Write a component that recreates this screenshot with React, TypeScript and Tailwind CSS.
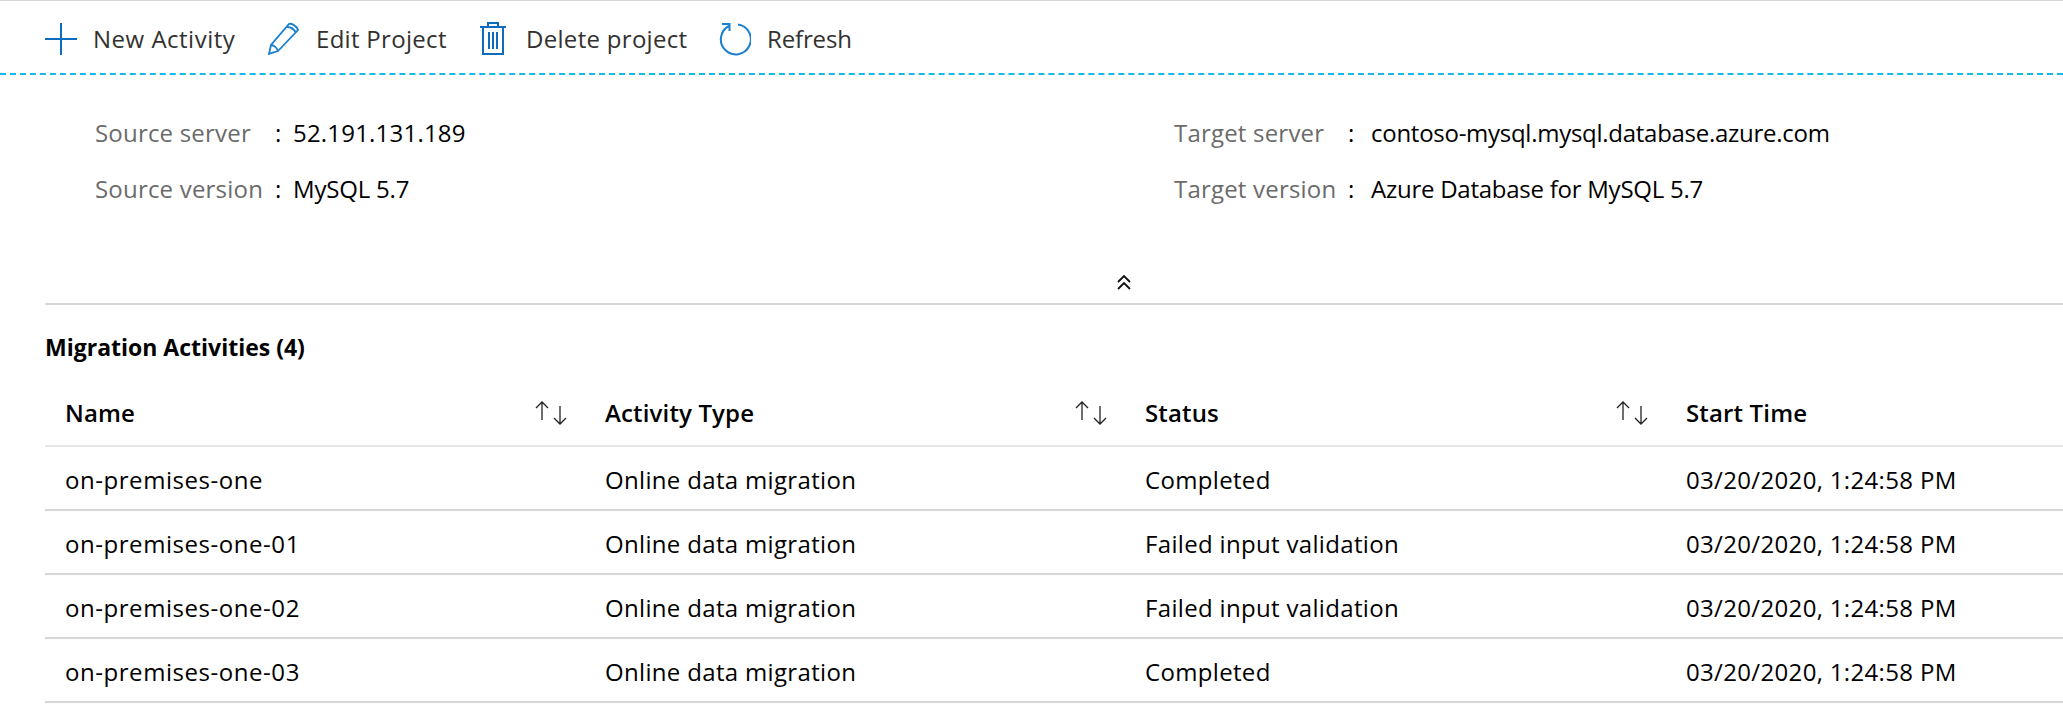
import React from "react";

const Btn = ({ icon, label, className }: { icon: React.ReactNode; label: string; className: string }) => (
  <div className={`flex items-center ${className}`}>
    {icon}
    <span>{label}</span>
  </div>
);

const rows = [
  ["on-premises-one", "Online data migration", "Completed", "03/20/2020, 1:24:58 PM"],
  ["on-premises-one-01", "Online data migration", "Failed input validation", "03/20/2020, 1:24:58 PM"],
  ["on-premises-one-02", "Online data migration", "Failed input validation", "03/20/2020, 1:24:58 PM"],
  ["on-premises-one-03", "Online data migration", "Completed", "03/20/2020, 1:24:58 PM"],
];

const Sort = () => (
  <svg width="34" height="26" viewBox="0 0 34 26" fill="none" stroke="#222" strokeWidth="1.3" className="mr-[17px]">
    <path d="M8 20V2M2 8l6-6 6 6" />
    <path d="M26 6v18M20 18l6 6 6-6" />
  </svg>
);

const Info = ({ label, value, w, cw, t }: { label: string; value: string; w: string; cw: string; t: string }) => (
  <div className="flex h-[56px] items-center">
    <span className={`${w} tracking-[0.2px] text-[#6b6b6b]`}>{label}</span>
    <span className={`${cw} text-black`}>:</span>
    <span className={`${t} text-black`}>{value}</span>
  </div>
);

export default function App() {
  return (
    <div className="h-[723px] w-[2063px] overflow-hidden bg-white text-[24px] text-black" style={{ fontFamily: '"Open Sans", "Noto Sans", sans-serif' }}>
      <div className="h-[75px] border-t border-[#d6d6d6] border-b-2 border-b-[#14b9e6] [border-bottom-style:dashed]">
        <div className="flex h-[72px] items-center pl-[45px] pt-[3px] tracking-[0.3px] text-[#323130]">
          <Btn
            className="w-[222px] tracking-[0.5px]"
            label="New Activity"
            icon={
              <svg width="32" height="32" viewBox="0 0 32 32" className="mr-[16px]" stroke="#0f6cbd" strokeWidth="2" fill="none">
                <path d="M16 0v32M0 16h32" />
              </svg>
            }
          />
          <Btn
            className="w-[212px]"
            label="Edit Project"
            icon={
              <svg width="34" height="34" viewBox="0 0 34 34" className="mr-[15px]" stroke="#1b7fd0" strokeWidth="1.8" fill="none">
                <path d="M2 32l2-9L22 2c2-1 8 2 9 6L11 29z M4 23c3 0 6 3 7 6 M20 5c4 0 7 2 9 6 M2 32l5-2" />
              </svg>
            }
          />
          <Btn
            className="w-[238px]"
            label="Delete project"
            icon={
              <svg width="28" height="34" viewBox="0 0 28 34" className="mr-[19px]" stroke="#0f6cbd" strokeWidth="2" fill="none">
                <path d="M1 5h26M9 5V1h10v4M4 5v27h20V5M10 10v17M14 10v17M18 10v17" />
              </svg>
            }
          />
          <Btn
            className="tracking-[-0.15px]"
            label="Refresh"
            icon={
              <svg width="34" height="34" viewBox="0 0 34 34" className="mr-[16px]" stroke="#1b7fd0" strokeWidth="2" fill="none">
                <path d="M12 4A15 15 0 1 0 21 2.500M5 2h7.500v7" />
              </svg>
            }
          />
        </div>
      </div>
      <div className="flex pl-[95px] pt-[30px]">
        <div className="w-[1079px]">
          <Info w="w-[180px]" cw="w-[18px]" t="tracking-[0.2px]" label="Source server" value="52.191.131.189" />
          <Info w="w-[180px]" cw="w-[18px]" t="tracking-[-0.2px]" label="Source version" value="MySQL 5.7" />
        </div>
        <div>
          <Info w="w-[174px]" cw="w-[23px]" t="tracking-[-0.27px]" label="Target server" value="contoso-mysql.mysql.database.azure.com" />
          <Info w="w-[174px]" cw="w-[23px]" t="tracking-[-0.25px]" label="Target version" value="Azure Database for MySQL 5.7" />
        </div>
      </div>
      <div className="ml-[45px] flex h-[88px] items-end justify-center border-b-2 border-[#d6d6d6] pb-[12px] pl-[140px]">
        <svg width="16" height="18" viewBox="0 0 16 18" fill="none" stroke="#111" strokeWidth="1.8">
          <path d="M2 9l6-6 6 6M2 16l6-6 6 6" />
        </svg>
      </div>
      <div className="ml-[45px] flex h-[84px] items-center text-[23px] font-bold">Migration Activities (4)</div>
      <div className="ml-[45px] grid h-[58px] grid-cols-[540px_540px_541px_1fr] border-b-2 border-[#e6e6e6] pb-[8px] font-semibold tracking-[0.15px]">
        {["Name", "Activity Type", "Status", "Start Time"].map((h, i) => (
          <div key={h} className="flex items-center justify-between pl-[20px]">
            <span>{h}</span>
            {i < 3 && <Sort />}
          </div>
        ))}
      </div>
      {rows.map((r) => (
        <div key={r[0]} className="ml-[45px] grid h-[64px] grid-cols-[540px_540px_541px_1fr] border-b-2 border-[#d6d6d6] pt-[3px] tracking-[0.33px]">
          {r.map((c, i) => (
            <div key={i} className="flex items-center pl-[20px]">
              <span className={i === 0 ? "tracking-[0.55px]" : ""}>{c}</span>
            </div>
          ))}
        </div>
      ))}
    </div>
  );
}
